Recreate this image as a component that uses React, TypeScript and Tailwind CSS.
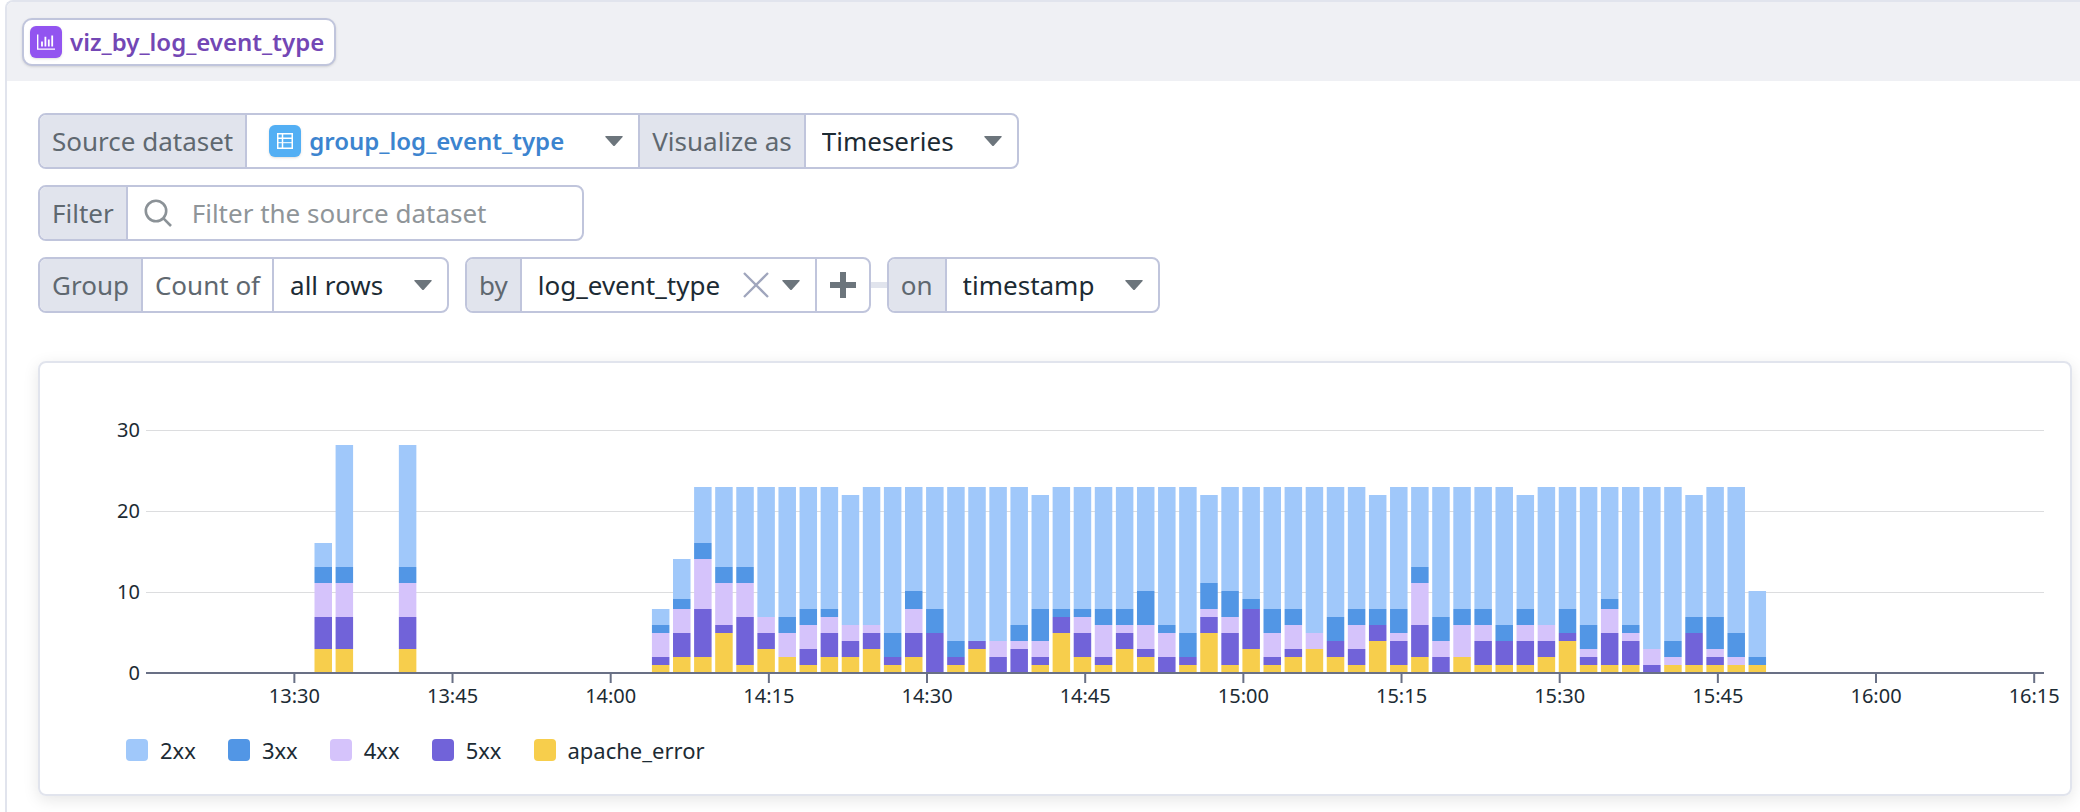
import { useId, type ReactNode } from "react";

type Counts = [number, number, number, number, number];

const SERIES = [
  { name: "2xx", swatch: "bg-[#a0c8fa]", fill: "fill-[#a0c8fa]" },
  { name: "3xx", swatch: "bg-[#5296e5]", fill: "fill-[#5296e5]" },
  { name: "4xx", swatch: "bg-[#d5c3fb]", fill: "fill-[#d5c3fb]" },
  { name: "5xx", swatch: "bg-[#7163d9]", fill: "fill-[#7163d9]" },
  { name: "apache_error", swatch: "bg-[#f7ce4c]", fill: "fill-[#f7ce4c]" },
];

// Running totals of each stack from the bottom up: apache_error, 5xx, 4xx, 3xx, 2xx.
// The first number of each entry is the two-minute slot, counted from 13:32.
const STACKS: [number, Counts][] = [
  [0, [3, 7, 11, 13, 16]],
  [1, [3, 7, 11, 13, 28]],
  [4, [3, 7, 11, 13, 28]],
  [16, [1, 2, 5, 6, 8]],
  [17, [2, 5, 8, 9, 14]],
  [18, [2, 8, 14, 16, 23]],
  [19, [5, 6, 11, 13, 23]],
  [20, [1, 7, 11, 13, 23]],
  [21, [3, 5, 7, 7, 23]],
  [22, [2, 2, 5, 7, 23]],
  [23, [1, 3, 6, 8, 23]],
  [24, [2, 5, 7, 8, 23]],
  [25, [2, 4, 6, 6, 22]],
  [26, [3, 5, 6, 6, 23]],
  [27, [1, 2, 2, 5, 23]],
  [28, [2, 5, 8, 10, 23]],
  [29, [0, 5, 5, 8, 23]],
  [30, [1, 2, 2, 4, 23]],
  [31, [3, 4, 4, 4, 23]],
  [32, [0, 2, 4, 4, 23]],
  [33, [0, 3, 4, 6, 23]],
  [34, [1, 2, 4, 8, 22]],
  [35, [5, 7, 7, 8, 23]],
  [36, [2, 5, 7, 8, 23]],
  [37, [1, 2, 6, 8, 23]],
  [38, [3, 5, 6, 8, 23]],
  [39, [2, 3, 6, 10, 23]],
  [40, [0, 2, 5, 6, 23]],
  [41, [1, 2, 2, 5, 23]],
  [42, [5, 7, 8, 11, 22]],
  [43, [1, 5, 7, 10, 23]],
  [44, [3, 8, 8, 9, 23]],
  [45, [1, 2, 5, 8, 23]],
  [46, [2, 3, 6, 8, 23]],
  [47, [3, 3, 5, 5, 23]],
  [48, [2, 4, 4, 7, 23]],
  [49, [1, 3, 6, 8, 23]],
  [50, [4, 6, 6, 8, 22]],
  [51, [1, 4, 5, 8, 23]],
  [52, [2, 6, 11, 13, 23]],
  [53, [0, 2, 4, 7, 23]],
  [54, [2, 2, 6, 8, 23]],
  [55, [1, 4, 6, 8, 23]],
  [56, [1, 4, 4, 6, 23]],
  [57, [1, 4, 6, 8, 22]],
  [58, [2, 4, 6, 6, 23]],
  [59, [4, 5, 5, 8, 23]],
  [60, [1, 2, 3, 6, 23]],
  [61, [1, 5, 8, 9, 23]],
  [62, [1, 4, 5, 6, 23]],
  [63, [0, 1, 3, 3, 23]],
  [64, [1, 1, 2, 4, 23]],
  [65, [1, 5, 5, 7, 22]],
  [66, [1, 2, 3, 7, 23]],
  [67, [1, 1, 2, 5, 23]],
  [68, [1, 1, 1, 2, 10]],
];

const TICKS = [
  "13:30", "13:45", "14:00", "14:15", "14:30", "14:45",
  "15:00", "15:15", "15:30", "15:45", "16:00", "16:15",
];

// The time axis spans 180 minutes; positions are percentages of its length.
const MINUTES = 180;
const FIRST_TICK = 14.07;
const FIRST_BAR = 15.98;
const BAR_MINUTES = 1.66;
const pct = (minutes: number) => `${(minutes / MINUTES) * 100}%`;

const BASE = 251;
const GRID_STEP = 81;
// Segment edges snap to a two-pixel grid.
const yOf = (value: number) => BASE - 2 * Math.round(value * 4.06);

function Caret() {
  return (
    <svg viewBox="0 0 18 10" className="pointer-events-none absolute right-[15px] h-[10px] w-[18px] fill-[#6c757c]" aria-hidden="true">
      <path d="M1 0h16q1.4 0 .6 1.1L10 9.4q-1 1-2 0L.4 1.1Q-.4 0 1 0z" />
    </svg>
  );
}

function Label({ htmlFor, children }: { htmlFor: string; children: ReactNode }) {
  return (
    <label htmlFor={htmlFor} className="flex items-center bg-[#e1e4ed] px-3 text-[#5f6870]">
      {children}
    </label>
  );
}

function Group({ children }: { children: ReactNode }) {
  return (
    <div className="flex h-14 divide-x-2 divide-[#c0c5dc] overflow-hidden rounded-lg border-2 border-[#c0c5dc] bg-white">
      {children}
    </div>
  );
}

function Picker({ id, value }: { id: string; value: string }) {
  return (
    <div className="relative flex items-center">
      <select id={id} className="h-full appearance-none bg-transparent pr-[63px] pl-4 text-[#1c2b34] outline-none">
        <option>{value}</option>
      </select>
      <Caret />
    </div>
  );
}

function ChartIcon() {
  return (
    <span className="flex size-8 items-center justify-center rounded-md bg-[#9254f0] shadow-sm">
      <svg viewBox="0 0 18 16" className="h-4 w-[18px] fill-none stroke-white" aria-hidden="true">
        <path strokeWidth="1.4" d="M.7.5v14.600H18" />
        <path strokeWidth="1.800" d="M5 12.500V7.500M8.400 12.500V2.800M11.800 12.500V5.600M15.200 12.500V1.500" />
      </svg>
    </span>
  );
}

function TableIcon() {
  return (
    <span className="pointer-events-none absolute left-[22px] flex size-8 items-center justify-center rounded-md bg-[#53aff4] shadow-sm">
      <svg viewBox="0 0 16 16" className="size-4 fill-none stroke-white" aria-hidden="true">
        <path strokeWidth="1.500" d="M.75.75h14.500v14.500H.75zM.75 5.200h14.500M5.500.75v14.500" />
        <path strokeWidth="1" d="M.75 9.700h14.500" />
      </svg>
    </span>
  );
}

function Chart() {
  return (
    <svg className="block h-[300px] w-full overflow-visible text-xl" role="img" aria-label="Count of all rows by log_event_type">
      {[3, 2, 1, 0].map((n) => (
        <g key={n}>
          <line x1="0" x2="100%" y1={BASE - n * GRID_STEP + 0.5} y2={BASE - n * GRID_STEP + 0.5} className="stroke-[#dcdddf]" />
          <text x="-6" y={BASE - n * GRID_STEP + 7} textAnchor="end" className="fill-[#1c2b34]">
            {n * 10}
          </text>
        </g>
      ))}
      {STACKS.map(([slot, totals]) =>
        totals.map((top, i) => {
          const bottom = i === 0 ? 0 : totals[i - 1];
          if (top === bottom) return null;
          return (
            <rect
              key={`${slot}-${i}`}
              x={pct(FIRST_BAR + slot * 2)}
              width={pct(BAR_MINUTES)}
              y={yOf(top)}
              height={yOf(bottom) - yOf(top)}
              className={SERIES[4 - i].fill}
            />
          );
        }),
      )}
      <line x1="0" x2="100%" y1={BASE} y2={BASE} strokeWidth="2" className="stroke-[#697085]" />
      {TICKS.map((t, i) => (
        <g key={t}>
          <line x1={pct(FIRST_TICK + i * 15)} x2={pct(FIRST_TICK + i * 15)} y1={BASE} y2={BASE + 10} strokeWidth="2" className="stroke-[#697085]" />
          <text x={pct(FIRST_TICK + i * 15)} y={BASE + 30} textAnchor="middle" className="fill-[#1c2b34]">
            {t}
          </text>
        </g>
      ))}
    </svg>
  );
}

export default function App() {
  const id = useId();
  return (
    <div className="flex min-h-screen flex-col bg-white pl-[5px] font-['Noto_Sans',sans-serif]">
      <main className="grow rounded-tl-lg border-t-2 border-l-2 border-[#e1e4ed]">
        <header className="flex h-[79px] items-center rounded-tl-md bg-[#eff0f4] px-[15px]">
          <h1 className="flex h-12 items-center gap-2 rounded-[10px] border-2 border-[#c0c5dc] bg-white pr-[10px] pl-[6px] text-2xl font-semibold text-[#7347b5] shadow-sm">
            <ChartIcon />
            viz_by_log_event_type
          </h1>
        </header>

        <div className="pt-8 pr-2 pb-3 pl-[31px]">
          <form className="flex flex-col items-start gap-4 text-[26px]">
            <Group>
              <Label htmlFor={`${id}-source`}>Source dataset</Label>
              <div className="relative flex items-center">
                <TableIcon />
                <select id={`${id}-source`} className="h-full appearance-none bg-transparent pr-[74px] pl-[62px] text-2xl font-semibold text-[#3c84cf] outline-none">
                  <option>group_log_event_type</option>
                </select>
                <Caret />
              </div>
              <Label htmlFor={`${id}-viz`}>Visualize as</Label>
              <Picker id={`${id}-viz`} value="Timeseries" />
            </Group>

            <Group>
              <Label htmlFor={`${id}-filter`}>Filter</Label>
              <div className="flex items-center gap-5 pl-4">
                <svg viewBox="0 0 28 28" className="size-7 fill-none stroke-[#8b9297]" strokeWidth="2.600" aria-hidden="true">
                  <circle cx="12" cy="12" r="10.200" />
                  <path d="M19.200 19.200l7.800 7.800" />
                </svg>
                <input id={`${id}-filter`} type="text" placeholder="Filter the source dataset" className="h-full w-[390px] bg-transparent text-[#1c2b34] outline-none placeholder:text-[#8f9599]" />
              </div>
            </Group>

            <div className="flex items-center">
              <Group>
                <Label htmlFor={`${id}-rows`}>Group</Label>
                <span className="flex items-center px-3 text-[#5f6870]">Count of</span>
                <Picker id={`${id}-rows`} value="all rows" />
              </Group>
              <div className="w-4" />
              <Group>
                <Label htmlFor={`${id}-by`}>by</Label>
                <div className="relative flex items-center">
                  <select id={`${id}-by`} className="h-full appearance-none bg-transparent pr-[94px] pl-4 text-[#1c2b34] outline-none">
                    <option>log_event_type</option>
                  </select>
                  <button type="button" aria-label="Clear" className="absolute right-[46px]">
                    <svg viewBox="0 0 26 26" className="size-[26px] fill-none stroke-[#a0a6bd]" strokeWidth="2.300" aria-hidden="true">
                      <path d="M1 1l24 24M25 1L1 25" />
                    </svg>
                  </button>
                  <Caret />
                </div>
                <button type="button" aria-label="Add grouping" className="flex w-[52px] items-center justify-center">
                  <svg viewBox="0 0 26 26" className="size-[26px] fill-none stroke-[#6c757c]" strokeWidth="6" aria-hidden="true">
                    <path d="M13 0v26M0 13h26" />
                  </svg>
                </button>
              </Group>
              <div className="h-[6px] w-4 bg-[#e1e4ed]" />
              <Group>
                <Label htmlFor={`${id}-on`}>on</Label>
                <Picker id={`${id}-on`} value="timestamp" />
              </Group>
            </div>
          </form>

          <section className="mt-12 rounded-lg border-2 border-[#e1e4ed] pt-[59px] pr-[26px] pb-7 pl-[106px] shadow-[0_4px_16px_rgba(0,0,0,0.1)]">
            <Chart />
            <ul className="mt-3 -ml-5 flex gap-8 text-[22px] leading-8 text-[#1c2b34]">
              {SERIES.map((s) => (
                <li key={s.name} className="flex items-center gap-3">
                  <span className={`size-[22px] rounded ${s.swatch}`} />
                  {s.name}
                </li>
              ))}
            </ul>
          </section>
        </div>
      </main>
    </div>
  );
}
